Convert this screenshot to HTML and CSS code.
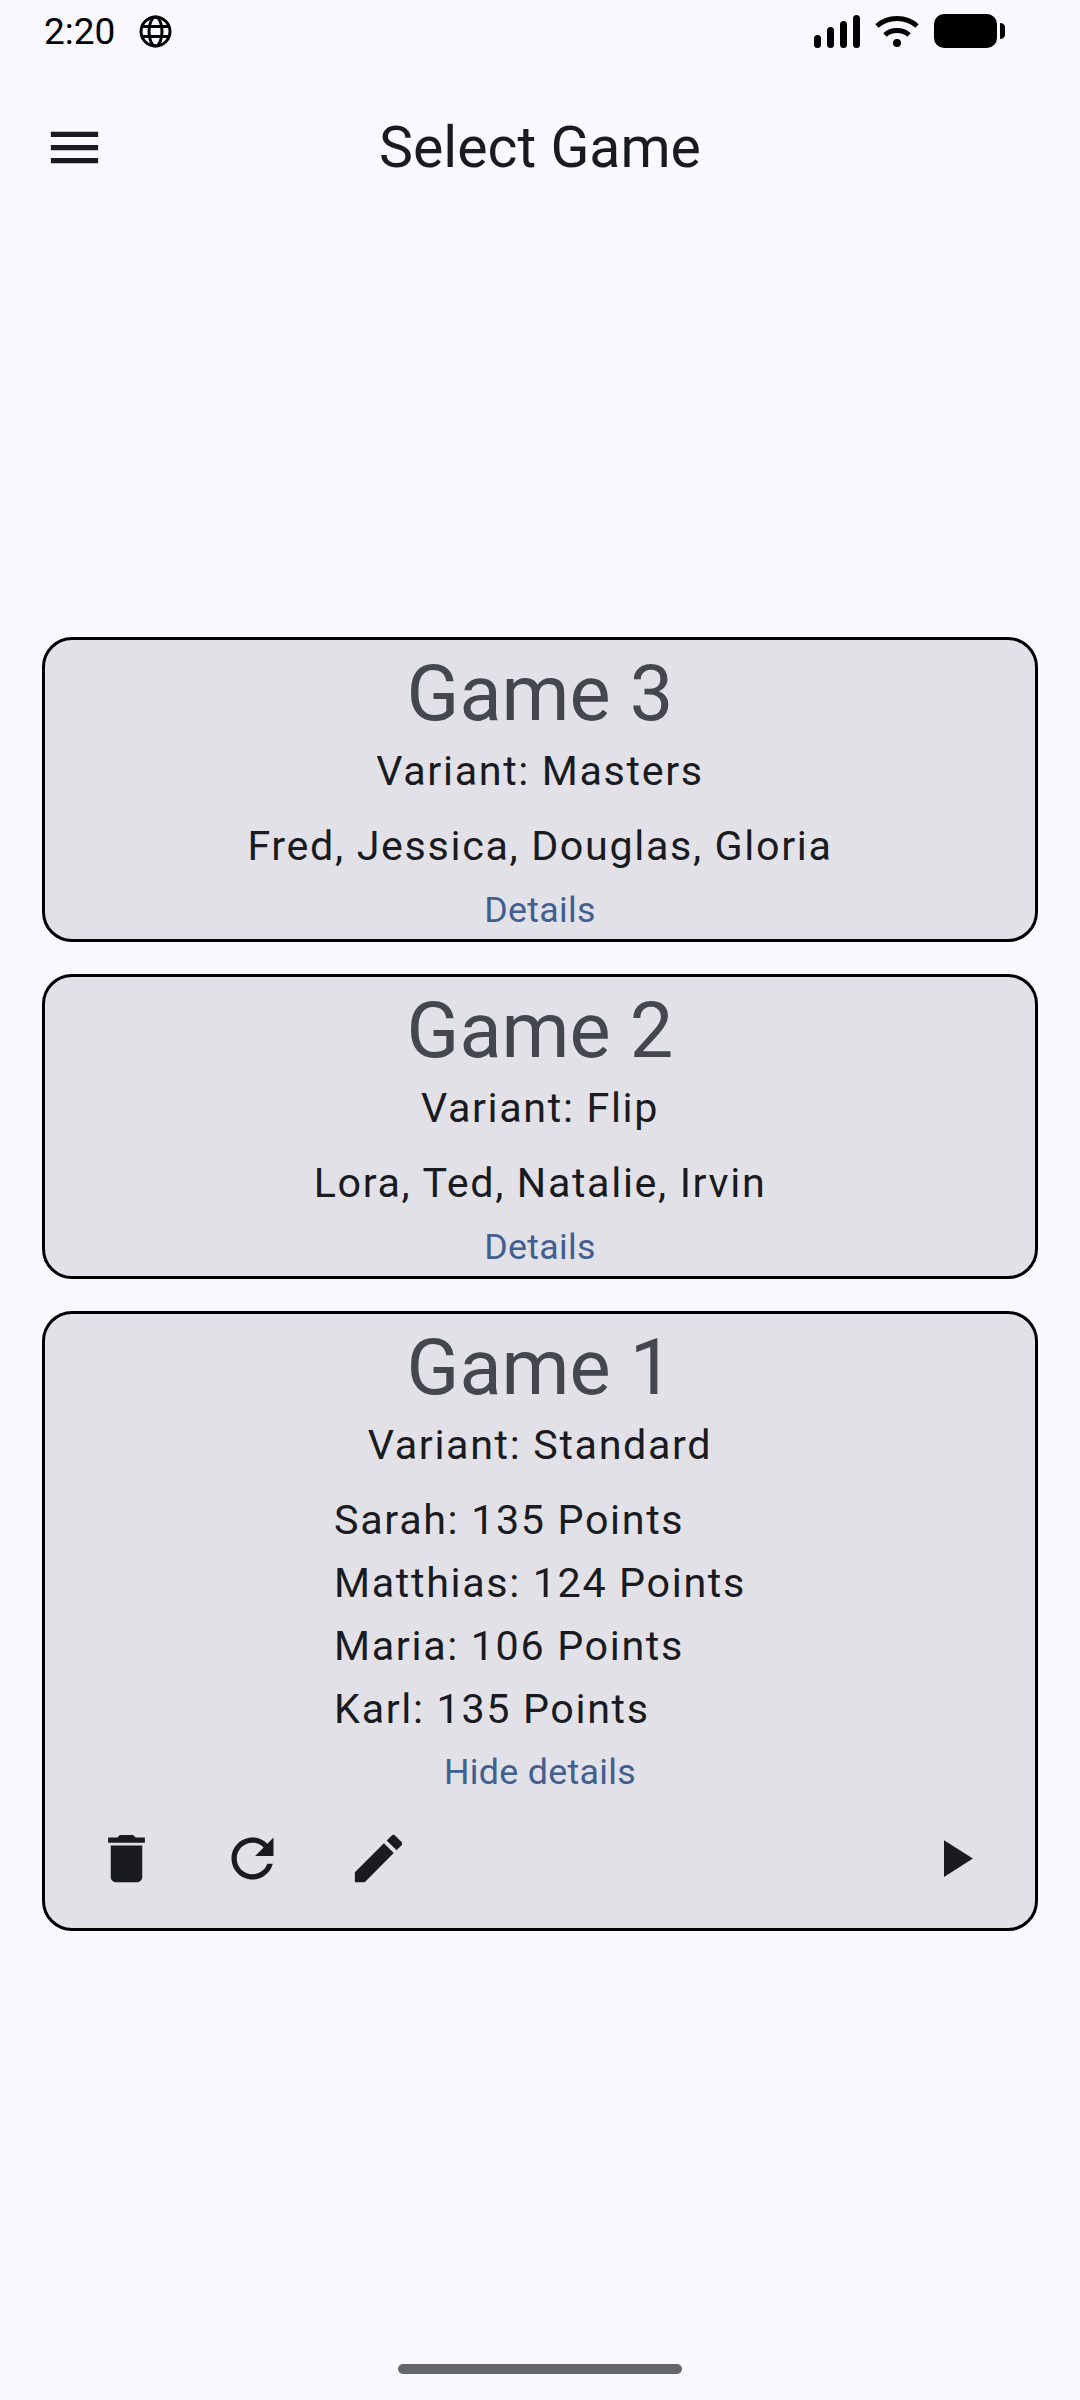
FILE: index.html
```html
<!DOCTYPE html>
<html lang="en">
<head>
    <meta charset="UTF-8">
    <meta name="viewport" content="width=device-width, initial-scale=1.0">
    <title>Select Game</title>
    <link rel="stylesheet" href="styles.css">
</head>
<body>
    <div class="screen">
        <div class="status-bar">
            <span class="clock">2:20</span>
            <svg class="globe" viewBox="0 0 33 33" fill="none" stroke="#000" stroke-width="3">
                <circle cx="16.5" cy="16.5" r="14.5"/>
                <ellipse cx="16.5" cy="16.5" rx="6.5" ry="14.5"/>
                <path d="M3 11.5h27M3 21.5h27"/>
            </svg>
            <span class="status-space"></span>
            <svg class="signal" viewBox="0 0 46 33" fill="#000">
                <rect x="0" y="20" width="7" height="13" rx="3.5"/>
                <rect x="13" y="12" width="7" height="21" rx="3.5"/>
                <rect x="26" y="6" width="7" height="27" rx="3.5"/>
                <rect x="39" y="0" width="7" height="33" rx="3.5"/>
            </svg>
            <svg class="wifi" viewBox="0 0 44 33" fill="none" stroke="#000" stroke-width="5">
                <path d="M2 11C13 1 31 1 42 11"/>
                <path d="M10 20C16 14 28 14 34 20"/>
                <circle cx="22" cy="28" r="4" fill="#000" stroke="none"/>
            </svg>
            <svg class="battery" viewBox="0 0 71 34" fill="#000">
                <rect x="0" y="0" width="63" height="34" rx="10"/>
                <path d="M66 9c3 0 5 2 5 4v8c0 2-2 4-5 4z"/>
            </svg>
        </div>

        <header class="top-bar">
            <svg class="icon menu-icon" viewBox="0 0 24 24"><path d="M3 18h18v-2H3v2zm0-5h18v-2H3v2zm0-7v2h18V6H3z"/></svg>
            <h1 class="page-title">Select Game</h1>
        </header>

        <main class="game-list">
            <section class="game-card">
                <h2 class="game-title">Game 3</h2>
                <p class="game-line">Variant: Masters</p>
                <p class="game-line players">Fred, Jessica, Douglas, Gloria</p>
                <a class="details-link">Details</a>
            </section>

            <section class="game-card">
                <h2 class="game-title">Game 2</h2>
                <p class="game-line">Variant: Flip</p>
                <p class="game-line players">Lora, Ted, Natalie, Irvin</p>
                <a class="details-link">Details</a>
            </section>

            <section class="game-card">
                <h2 class="game-title">Game 1</h2>
                <p class="game-line">Variant: Standard</p>
                <ul class="scores">
                    <li>Sarah: 135 Points</li>
                    <li>Matthias: 124 Points</li>
                    <li>Maria: 106 Points</li>
                    <li>Karl: 135 Points</li>
                </ul>
                <a class="details-link hide-link">Hide details</a>
                <div class="card-actions">
                    <svg class="icon" viewBox="0 0 24 24"><path d="M6 19c0 1.1.9 2 2 2h8c1.1 0 2-.9 2-2V7H6v12zM19 4h-3.5l-1-1h-5l-1 1H5v2h14V4z"/></svg>
                    <svg class="icon" viewBox="0 0 24 24"><path d="M17.65 6.35C16.2 4.9 14.21 4 12 4c-4.42 0-7.99 3.58-7.99 8s3.57 8 7.99 8c3.73 0 6.84-2.55 7.73-6h-2.08c-.82 2.33-3.04 4-5.65 4-3.31 0-6-2.69-6-6s2.69-6 6-6c1.66 0 3.14.69 4.22 1.78L13 11h7V4l-2.35 2.35z"/></svg>
                    <svg class="icon" viewBox="0 0 24 24"><path d="M3 17.25V21h3.75L17.81 9.94l-3.75-3.75L3 17.25zM20.71 7.04c.39-.39.39-1.02 0-1.41l-2.34-2.34c-.39-.39-1.02-.39-1.41 0l-1.83 1.83 3.75 3.75 1.83-1.83z"/></svg>
                    <svg class="icon play-icon" viewBox="0 0 24 24"><path d="M8 5v14l11-7z"/></svg>
                </div>
            </section>
        </main>

        <div class="home-indicator"></div>
    </div>
</body>
</html>
```

FILE: styles.css
```css
* {
    box-sizing: border-box;
}
body {
    margin: 0;
    background-color: #faf9ff;
    font-family: Roboto, sans-serif;
    color: #1a1b20;
}
.screen {
    width: 1080px;
    height: 2400px;
    display: flex;
    flex-direction: column;
}
.status-bar {
    height: 62px;
    padding: 0 75px 0 44px;
    display: flex;
    align-items: center;
    color: #000;
}
.clock {
    font-size: 37px;
}
.globe {
    width: 33px;
    height: 33px;
    margin-left: 24px;
}
.status-space {
    flex: 1;
}
.signal {
    width: 46px;
    height: 33px;
    margin-right: 15px;
}
.wifi {
    width: 44px;
    height: 33px;
    margin-right: 15px;
}
.battery {
    width: 71px;
    height: 34px;
}
.top-bar {
    height: 170px;
    display: flex;
    align-items: center;
    justify-content: center;
    position: relative;
}
.menu-icon {
    position: absolute;
    left: 43px;
    top: 54px;
}
.page-title {
    margin: 0;
    font-size: 57.2px;
    font-weight: 400;
}
.icon {
    width: 63px;
    height: 63px;
    fill: #1a1b20;
}
.game-list {
    margin: 405px 42px 0;
    display: flex;
    flex-direction: column;
    gap: 32px;
}
.game-card {
    background: #e2e1e8;
    border: 3px solid #000;
    border-radius: 30px;
    padding: 3px 0;
    display: flex;
    flex-direction: column;
    align-items: center;
}
.game-title {
    margin: 0;
    font-size: 77.5px;
    font-weight: 400;
    line-height: 102px;
    color: #44474e;
}
.game-line {
    margin: 0;
    font-size: 41.25px;
    line-height: 52px;
    letter-spacing: 1.65px;
}
.players {
    margin-top: 23px;
}
.scores {
    list-style: none;
    margin: 18px 0 0;
    padding: 0;
    font-size: 41.25px;
    line-height: 63px;
    letter-spacing: 1.65px;
}
.details-link {
    margin-top: 12px;
    font-size: 35.75px;
    line-height: 52px;
    letter-spacing: 0.3px;
    color: #415f91;
}
.hide-link {
    margin-top: 5px;
}
.card-actions {
    align-self: stretch;
    padding: 0 49px 0 50px;
    margin-top: 29px;
    margin-bottom: 35px;
    display: flex;
    gap: 63px;
}
.play-icon {
    margin-left: auto;
}
.home-indicator {
    width: 284px;
    height: 10px;
    border-radius: 5px;
    background: #65666b;
    margin: auto auto 26px;
}
```
